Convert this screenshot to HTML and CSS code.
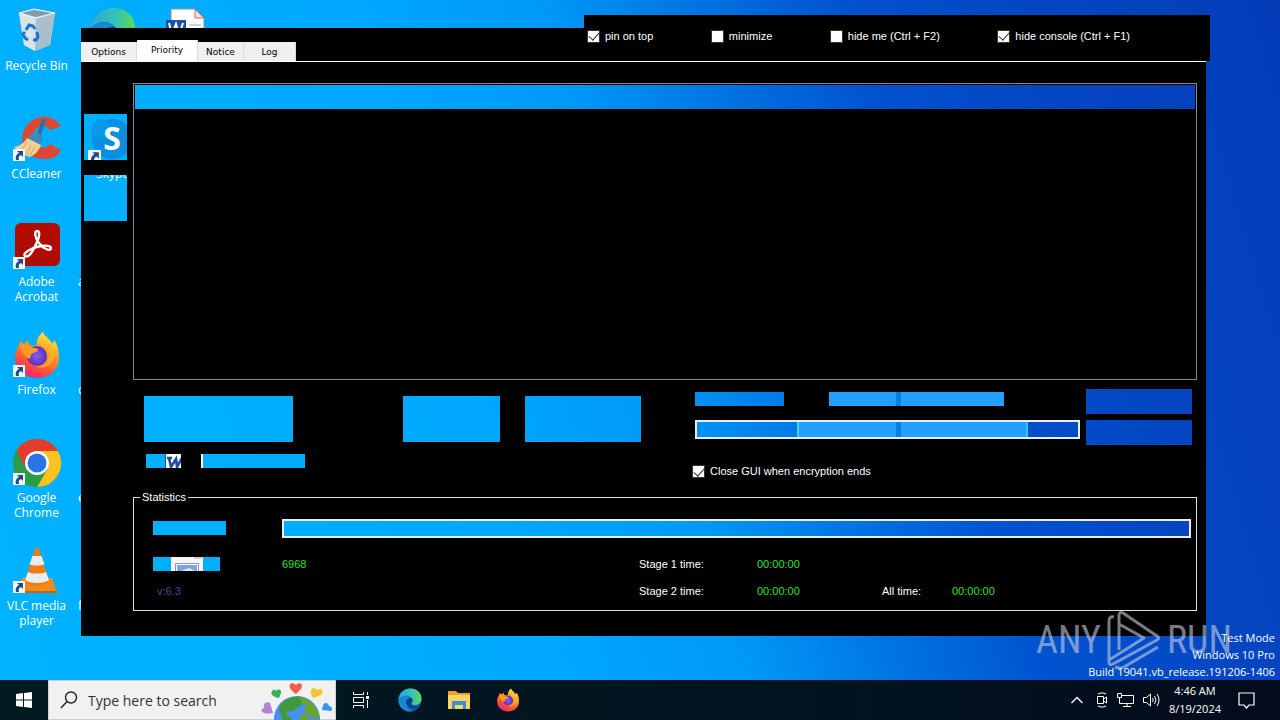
FILE: index.html
```
<!DOCTYPE html>
<html lang="en">
<head>
<meta charset="utf-8">
<title>Desktop</title>
<link rel="stylesheet" href="styles.css">
</head>

<body>
  <!-- shared icons -->
  <svg class="sprite" aria-hidden="true">
    <defs>
      <linearGradient id="edgeTop" x1="0" y1="0" x2="1" y2="0"><stop offset="0" stop-color="#2aa8dc"/><stop offset=".6" stop-color="#35c3b5"/><stop offset="1" stop-color="#63d94e"/></linearGradient>
      <linearGradient id="edgeLow" x1="0" y1="0" x2="1" y2="1"><stop offset="0" stop-color="#1c8fdc"/><stop offset="1" stop-color="#0f4c9c"/></linearGradient>
      <linearGradient id="foxBody" x1=".8" y1="0" x2=".3" y2="1"><stop offset="0" stop-color="#fff04a"/><stop offset=".4" stop-color="#ff9a1f"/><stop offset=".75" stop-color="#ff4b3c"/><stop offset="1" stop-color="#e8207e"/></linearGradient>
      <radialGradient id="foxCore"><stop offset="0" stop-color="#8a5cf5"/><stop offset="1" stop-color="#5533b8"/></radialGradient>
    </defs>
    <symbol id="edge" viewBox="0 0 48 48">
      <circle cx="24" cy="24" r="23" fill="url(#edgeLow)"/>
      <path d="M1 23C3 9 13 1 25 1c13 0 22 9 22 20 0 8-6 13-13 13-5 0-8-2-7-4 3-3 3-7 0-10C21 13 8 13 1 23z" fill="url(#edgeTop)"/>
      <path d="M1 24c6-9 19-11 26-4-8-2-12 4-11 11 1 8 8 14 15 15C14 50 0 38 1 24z" fill="#1787d8"/>
      <path d="M27 20c-7-1-11 5-10 11 2 9 15 14 26 6-9 2-17-1-16-7 3-3 3-7 0-10z" fill="#0d3f86"/>
    </symbol>
    <symbol id="firefox" viewBox="0 0 48 48">
      <path d="M46 27c0 12-10 20-22 20S2 38 2 26c0-5 2-9 4-12l1-4 4 3 4-4c0 4 2 5 4 6l5-1c-1-5 2-10 6-13 2 5 6 6 9 11 1 1 2-1 2-3 4 5 5 12 5 18z" fill="url(#foxBody)"/>
      <circle cx="24" cy="25" r="10" fill="url(#foxCore)"/>
      <path d="M7 14c6-2 11 2 14 3 1 0 4 0 4 2 0 3-6 2-7 5-1 2 0 3-2 4-4-3-8-6-9-14z" fill="#ff9b22"/>
      <path d="M24 15c5-3 11 1 12 7 1 9-6 14-14 13 11 5 20-2 20-13 0-9-9-13-18-7z" fill="#ffb62a" opacity=".65"/>
    </symbol>
    <symbol id="shortcut" viewBox="0 0 12 12">
      <path d="M0 0h12v12H0z" fill="#f4f8fc"/>
      <path d="M3 11C2 7 4 5 6 4L4 2h6v6L8 6C6 7 5 8 6 11z" fill="#1f4a86"/>
    </symbol>
  </svg>

  <main class="desktop">
    <ul class="apps">
      <li class="app">
        <svg class="app-icon" viewBox="0 0 48 48">
          <path d="M6 6l15-4 21 4-5 32-15 6-11-6z" fill="#b9cfdc"/>
          <path d="M6 6l17 5-1 33-11-6z" fill="#d9e3e8"/>
          <path d="M23 11l19-5-5 32-15 6z" fill="#a9bfcb"/>
          <path d="M9 6l12-3 18 3-16 4z" fill="#7e9cab"/>
          <path d="M6 6l15-4 21 4-19 5z" fill="none" stroke="#eef6fa"/>
          <path d="M13 23l3-5 4 1 2 3M24 25l1 5-2 3h-3M15 33l-3-2-2-4 2-2" fill="none" stroke="#1378cf" stroke-width="3"/>
        </svg>
        <span class="app-name">Recycle Bin</span>
      </li>
      <li class="app">
        <svg class="app-icon" viewBox="0 0 48 48">
          <path d="M48 11C38-4 15 0 10 18 6 36 19 45 33 44c7 0 12-3 15-9l-11-6c-7 8-17 1-16-9 1-10 11-12 16-5z" fill="#de4733"/>
          <path d="M29 4l-6 17 4 2 6-18z" fill="#2873ad"/>
          <path d="M19 18c6-2 13 3 10 10l-5 3-10-6z" fill="#3e89bf"/>
          <path d="M14 23l14 7c-2 6-7 11-12 12C10 40 4 35 1 32c6-1 10-4 13-9z" fill="#f3cf92"/>
          <path d="M13 28L8 37M18 30l-4 10M22 32l-5 8" stroke="#dba75e"/>
          <use href="#shortcut" x="0" y="34" width="12" height="12"/>
        </svg>
        <span class="app-name">CCleaner</span>
      </li>
      <li class="app">
        <svg class="app-icon" viewBox="0 0 48 48">
          <rect x="2" y="0" width="45" height="43" rx="6" fill="#b20b00"/>
          <path d="M12 33c-3-3 8-9 16-10 5-1 10 0 10 2 0 4-8 1-12-5-4-5-5-12-2-12s3 5 0 11c-3 7-8 17-12 14z" fill="none" stroke="#fff" stroke-width="2.4"/>
          <use href="#shortcut" x="0" y="34" width="12" height="12"/>
        </svg>
        <span class="app-name">Adobe<br>Acrobat</span>
      </li>
      <li class="app">
        <svg class="app-icon" viewBox="0 0 48 48">
          <use href="#firefox" width="48" height="48"/>
          <use href="#shortcut" x="0" y="34" width="12" height="12"/>
        </svg>
        <span class="app-name">Firefox</span>
      </li>
      <li class="app">
        <svg class="app-icon" viewBox="0 0 48 48">
          <circle cx="24" cy="24" r="24" fill="#34a853"/>
          <path d="M3.200 12A24 24 0 0 1 44.800 12H24L13.600 30z" fill="#e33b2e"/>
          <path d="M44.800 12A24 24 0 0 1 24 48L34.400 30 24 12z" fill="#fcc31e"/>
          <path d="M3.200 12A24 24 0 0 0 24 48L34.400 30H13.600z" fill="#2b9c47"/>
          <circle cx="24" cy="24" r="12" fill="#fff"/>
          <circle cx="24" cy="24" r="9.500" fill="#2a74e8"/>
          <use href="#shortcut" x="0" y="34" width="12" height="12"/>
        </svg>
        <span class="app-name">Google<br>Chrome</span>
      </li>
      <li class="app">
        <svg class="app-icon" viewBox="0 0 48 48">
          <path d="M9 31h30l5 15H5z" fill="#f08a1c"/>
          <path d="M5 44h39v2H5z" fill="#c9600c"/>
          <path d="M22 2q2-2 4 0l10 32c-3 6-21 6-24 0z" fill="#ee7c10"/>
          <path d="M19.500 9h9l3 8c-3 2-12 2-15 0zM15 25c5 2 13 2 18 0l3 8c-5 4-19 4-24 0z" fill="#e9edf0"/>
          <use href="#shortcut" x="0" y="34" width="12" height="12"/>
        </svg>
        <span class="app-name">VLC media<br>player</span>
      </li>

      <li class="app">
        <svg class="app-icon" viewBox="0 0 48 48"><use href="#edge" width="48" height="48"/></svg>
      </li>
      <li class="app covered row-3"><span class="app-name">a</span></li>
      <li class="app covered"><span class="app-name">c</span></li>
      <li class="app covered"><span class="app-name">e</span></li>
      <li class="app covered"><span class="app-name">f</span></li>

      <li class="app third">
        <svg class="app-icon" viewBox="0 0 48 48">
          <path d="M8 2h24l9 9v35H8z" fill="#fff" stroke="#8c9197"/>
          <path d="M32 2v9h9z" fill="#dfe3e8" stroke="#d2665a"/>
          <path d="M26 18h12M26 22h12" stroke="#9aa9c4"/>
          <path d="M3 13h20v20H3z" fill="#1f52a3"/>
          <path d="M6 16l3 12 4-11 3 11 4-12" fill="none" stroke="#fff" stroke-width="2"/>
        </svg>
      </li>
    </ul>

    <section class="window main-window">
      <nav class="tabs">
        <button type="button" class="tab">Options</button>
        <button type="button" class="tab active">Priority</button>
        <button type="button" class="tab">Notice</button>
        <button type="button" class="tab">Log</button>
      </nav>

      <div class="tab-body">
        <div class="side">
          <div class="glass side-pane">
            <svg class="skype" viewBox="0 0 43 46">
              <circle cx="28" cy="25" r="20" fill="#0b8fe0"/>
              <circle cx="17" cy="15" r="10" fill="#089ae8"/>
              <text x="28" y="36" class="skype-letter">S</text>
              <use href="#shortcut" x="4" y="36" width="13" height="13"/>
            </svg>
          </div>
          <div class="glass side-pane"><span class="app-name cut">Skype</span></div>
        </div>

        <div class="content">
          <div class="list"><div class="glass list-header"></div></div>

          <div class="controls">
            <div class="actions">
              <div class="big-buttons">
                <button type="button" class="glass big wide" aria-label="Action 1"></button>
                <button type="button" class="glass big" aria-label="Action 2"></button>
                <button type="button" class="glass big mid" aria-label="Action 3"></button>
              </div>
              <div class="fields">
                <div class="glass field-label">
                  <svg class="word-bit" viewBox="0 0 16 14"><path d="M0 0h16v14H0z" fill="#fff"/><path d="M0 0h1v14H0z" fill="#1f4f9c"/><path d="M2 4h5M4 4l2 9 5-8 1 8 5-9" fill="none" stroke="#1f4f9c" stroke-width="2.600"/></svg>
                </div>
                <div class="glass field-value"></div>
              </div>
            </div>

            <div class="load">
              <div class="load-labels">
                <div class="glass load-name"></div>
                <div class="glass load-value"></div>
              </div>
              <div class="glass bar"></div>
              <label class="check"><input type="checkbox" checked>Close GUI when encryption ends</label>
            </div>

            <div class="run-buttons">
              <button type="button" class="glass run" aria-label="Run 1"></button>
              <button type="button" class="glass run" aria-label="Run 2"></button>
            </div>
          </div>

          <fieldset class="stats">
            <legend>Statistics</legend>
            <div class="stats-grid">
              <div class="glass stat-label"></div>
              <div class="glass bar total"></div>
              <div class="glass stat-label short">
                <svg class="doc-bit" viewBox="0 0 32 14"><path d="M0 0h32v14H0z" fill="#f6f7fb"/><path d="M4.500 14V6.500h23V14" fill="#fff" stroke="#8d9ab5"/><path d="M6 8h20v6H6z" fill="#7fa4e4"/><path d="M10 14l8-3 6 3z" fill="#dce8fa"/><path d="M23 1h8" stroke="#e08a84"/></svg>
              </div>
              <span class="num">6968</span>
              <span>Stage 1 time:</span>
              <span class="num all-rest">00:00:00</span>
              <span class="version">v:6.3</span>
              <span class="stage-2">Stage 2 time:</span>
              <span class="num">00:00:00</span>
              <span>All time:</span>
              <span class="num">00:00:00</span>
            </div>
          </fieldset>
        </div>
      </div>
    </section>

    <section class="window option-bar">
      <label class="check"><input type="checkbox" checked>pin on top</label>
      <label class="check"><input type="checkbox">minimize</label>
      <label class="check"><input type="checkbox">hide me (Ctrl + F2)</label>
      <label class="check"><input type="checkbox" checked>hide console (Ctrl + F1)</label>
    </section>

    <div class="watermark">
      <span>ANY</span>
      <svg class="play" viewBox="0 0 56 60" fill="none" stroke="currentColor" stroke-width="3" stroke-linejoin="round">
        <path d="M8 7q-5-1-5 4v41q0 4 4 2l44-24q3-2 0-4L17 3q-4-2-4 3v34M13 14l25 14-35 22"/>
        <path d="M9 57q5 2 9 0l34-20"/>
      </svg>
      <span>RUN</span>
    </div>
    <p class="build">Test Mode<br>Windows 10 Pro<br>Build 19041.vb_release.191206-1406</p>
  </main>

  <footer class="taskbar">
    <button type="button" class="task start" aria-label="Start">
      <svg width="16" height="16" viewBox="0 0 16 16" fill="#fff"><path d="M0 2l7-1v6.500H0zM8 1l8-1v7.500H8zM0 8.500h7V15l-7-1zM8 8.500h8V16l-8-1z"/></svg>
    </button>
    <label class="search">
      <svg width="18" height="18" viewBox="0 0 18 18" fill="none" stroke="#222" stroke-width="1.400"><circle cx="11" cy="6.500" r="5.500"/><path d="M7 10.500L1 17"/></svg>
      <input type="text" placeholder="Type here to search">
      <svg class="doodle" viewBox="0 0 72 40">
        <circle cx="37" cy="39" r="23" fill="#4a8ef0"/>
        <path d="M20 26c5-8 16-11 24-8 3 3-3 4-3 7 0 3-6 1-6 5-4 2-7 0-9 3 1 4 5 3 6 7H22c1-5-5-7-2-14z" fill="#3f9b38"/>
        <path d="M40 17c11 2 19 11 19 21-4 2-7 0-8-4-4 0-8-1-7-5l4-3c-4-1-8-3-8-9zM41 34l7 1 2 5H40z" fill="#6aa52c"/>
        <path d="M36 14c-9-6-7-11-3-11l3 2c4-4 8 0 5 4z" fill="#f0604e"/>
        <path d="M19 18c-8-1-9-6-6-8 2-1 3 1 3 1 2-3 6-1 5 2z" fill="#36b25c"/>
        <path d="M53 18c-4-6-2-10 1-10l3 2c5-3 7 2 4 5z" fill="#f9c12c"/>
        <path d="M13 33c-10 2-13-2-11-4l2-1c-1-5 3-7 6-5z" fill="#b184dc"/>
        <path d="M62 30c1-8 4-8 6-6l1 2c4 1 4 4 2 5z" fill="#2f9be8"/>
      </svg>
    </label>
    <button type="button" class="task" aria-label="Task View">
      <svg width="18" height="18" viewBox="0 0 18 18" fill="none" stroke="#fff"><path d="M1.500 1v2.500h10V1M1.500 17v-2.500h10V17M1.500 6.500h10v5h-10zM15.500 1v3M15.500 9v8"/><path d="M14 5h3v3h-3z" fill="#fff" stroke="none"/></svg>
    </button>
    <button type="button" class="task" aria-label="Edge"><svg width="24" height="24"><use href="#edge"/></svg></button>
    <button type="button" class="task" aria-label="File Explorer">
      <svg width="22" height="20" viewBox="0 0 22 20"><path d="M0 1h8l2 2h12v15H0z" fill="#e8a321"/><path d="M0 5h22v14H0z" fill="#fcd462"/><path d="M4 11h14v8h-3v-4H7v4H4z" fill="#3a8fd6"/></svg>
    </button>
    <button type="button" class="task" aria-label="Firefox"><svg width="24" height="24"><use href="#firefox"/></svg></button>

    <div class="tray">
      <svg width="12" height="8" viewBox="0 0 12 8" fill="none" stroke="#fff" stroke-width="1.300"><path d="M.5 7L6 1.500 11.500 7"/></svg>
      <svg class="camera" width="12" height="16" viewBox="0 0 12 16" fill="none" stroke="#fff"><path d="M1.500 4.500h6v7h-6zM7.500 7l3-2v6l-3-2M2 2q4-2.500 8 0M2 14q4 2.500 8 0"/></svg>
      <svg width="17" height="14" viewBox="0 0 17 14" fill="none" stroke="#fff"><path d="M4.500 2.500h12v8h-12M6 13.500h8M10 10.500v3M.5.500h4v4h-4zM2.500 4.500v6h4"/></svg>
      <svg width="17" height="14" viewBox="0 0 17 14" fill="none" stroke="#fff"><path d="M.5 4.500h3l4-3.500v12l-4-3.500h-3zM9.500 5q1.500 2 0 4M11.500 3q3 4 0 8M14 1q4 6 0 12"/></svg>
      <time class="clock">4:46 AM<br>8/19/2024</time>
      <svg class="notes" width="17" height="17" viewBox="0 0 17 17" fill="none" stroke="#fff" stroke-width="1.200"><path d="M1 1h15v12h-5l-2.500 3L6 13H1z"/></svg>
    </div>
  </footer>
</body>
</html>
```
FILE: styles.css
```
:root {
  --wallpaper: linear-gradient(73deg, #00b2ff 0%, #00aeff 24%, #00a8ff 38%, #0098f6 51%, #0070e0 62%, #0052d0 71%, #0446c2 83%, #043cb8 100%);
  --logo: linear-gradient(90deg, #36dcf6 0 2px, #22a0ff 2px 99px, #0a7ee0 99px 104px, #22a0ff 104px 229px, #36c4ff 229px);
}

* { box-sizing: border-box; }

body {
  margin: 0;
  height: 100vh;
  display: flex;
  flex-direction: column;
  overflow: hidden;
  background: var(--wallpaper) fixed;
  font-family: "Liberation Sans", Arial, sans-serif;
  font-size: 11px;
  color: #fff;
}

button {
  border: 0;
  padding: 0;
  font: inherit;
}

.sprite {
  position: absolute;
  width: 0;
  height: 0;
}

.desktop {
  flex: 1;
  position: relative;
  min-height: 0;
}

/* desktop icons */
.apps {
  list-style: none;
  margin: 0;
  padding: 0;
  display: grid;
  grid-template-rows: repeat(6, 108px);
  grid-auto-columns: 73px;
  grid-auto-flow: column;
  column-gap: 2px;
}
.app {
  display: flex;
  flex-direction: column;
  align-items: center;
  gap: 3px;
  padding-top: 7px;
}
.app-icon {
  width: 48px;
  height: 48px;
}
.app-name {
  font: 12px/15px "Open Sans", "Noto Sans", sans-serif;
  text-align: center;
  white-space: nowrap;
}
.covered {
  padding: 58px 0 0 3px;
  align-items: flex-start;
}
.row-3 { grid-row: 3; }
.third {
  grid-column: 3;
  grid-row: 1;
}

/* windows */
.window {
  position: absolute;
  background: #000;
}
.main-window {
  left: 81px;
  right: 74px;
  top: 28px;
}
.option-bar {
  left: 584px;
  right: 70px;
  top: 15px;
  height: 46px;
  padding: 0 80px 4px 3px;
  display: flex;
  align-items: center;
  justify-content: space-between;
}

/* parts of a window that let the wallpaper through */
.glass {
  background: var(--logo) 797px 385px / 231px 60px no-repeat fixed, var(--wallpaper) fixed;
}

.tabs {
  height: 34px;
  display: flex;
  align-items: flex-end;
  border-bottom: 1px solid #fff;
}
.tab {
  width: 52px;
  height: 19px;
  background: #f0f0f0;
  border-right: 1px solid #dcdcdc;
  font: 9px "DejaVu Sans", Verdana, sans-serif;
  color: #000;
}
.tab:first-child { width: 56px; }
.tab:nth-child(3) { width: 46px; }
.tab.active {
  width: 61px;
  height: 21px;
  padding-bottom: 2px;
  background: #fff;
}

.tab-body {
  display: flex;
  gap: 6px;
  padding: 21px 9px 25px 3px;
}
.side {
  width: 43px;
  padding-top: 31px;
  display: flex;
  flex-direction: column;
  gap: 15px;
}
.side-pane {
  height: 46px;
  overflow: hidden;
}
.skype {
  display: block;
  width: 43px;
  height: 46px;
}
.skype-letter {
  font: bold 32px "Open Sans", sans-serif;
  fill: #fff;
  text-anchor: middle;
}
.cut {
  display: block;
  margin: -9px 0 0 12px;
  text-align: left;
}

.content { flex: 1; }
.list {
  height: 297px;
  padding: 1px;
  border: 1px solid #7f8a90;
}
.list-header { height: 24px; }

.controls {
  display: grid;
  grid-template-columns: 551fr 391fr 106px;
  padding: 9px 5px 0 11px;
}
.actions { padding-top: 7px; }
.big-buttons, .fields, .load-labels { display: flex; }
.big {
  width: 97px;
  height: 46px;
}
.big.wide {
  width: 149px;
  margin-right: 110px;
}
.big.mid {
  width: 116px;
  margin-left: 25px;
}
.fields {
  gap: 20px;
  padding: 12px 0 0 2px;
}
.field-label {
  width: 35px;
  height: 14px;
  display: flex;
  justify-content: flex-end;
}
.word-bit {
  width: 16px;
  height: 14px;
}
.field-value {
  width: 104px;
  border-left: 2px solid #fff;
}

.load { padding: 3px 6px 0 0; }
.load-labels {
  gap: 45px;
  margin-bottom: 14px;
}
.load-name {
  width: 89px;
  height: 14px;
}
.load-value { width: 175px; }
.bar {
  height: 19px;
  border: 2px solid #e6f0f4;
}
.load .check { margin: 26px 0 0 -3px; }

.run-buttons {
  display: flex;
  flex-direction: column;
  gap: 6px;
}
.run { height: 25px; }

.check {
  display: flex;
  align-items: center;
  gap: 5px;
  line-height: 13px;
}
.check input {
  appearance: none;
  width: 13px;
  height: 13px;
  margin: 0;
  background: #fff;
  border: 1px solid #333;
  display: grid;
  place-items: center;
}
.check input:checked::before {
  content: "";
  width: 9px;
  height: 5px;
  border: solid #333;
  border-width: 0 0 1px 1px;
  transform: translateY(-1px) rotate(-48deg);
}

.stats {
  min-width: 0;
  margin: 13px 0 0;
  padding: 9px 5px 12px 19px;
  border: 1px solid #dcdcdc;
}
.stats legend {
  margin-left: -13px;
  padding: 0 2px;
  line-height: 12px;
}
.stats-grid {
  display: grid;
  grid-template-columns: 129px 357fr 118px 125px 70px 239fr;
  grid-template-rows: 32px 14px 14px;
  row-gap: 13px;
  align-items: center;
  line-height: 14px;
}
.stats-grid .total {
  grid-column: 2 / -1;
}
.stat-label {
  width: 73px;
  height: 14px;
}
.stat-label.short {
  width: 67px;
  padding-left: 18px;
}
.doc-bit {
  display: block;
  width: 32px;
  height: 14px;
}
.num { color: #2fe02f; }
.all-rest { grid-column: 4 / -1; }
.version {
  padding-left: 4px;
  color: #4a4a9c;
}
.stage-2 { grid-column: 3; }

/* corner marks */
.watermark {
  position: absolute;
  right: 48px;
  bottom: 10px;
  display: flex;
  align-items: center;
  gap: 5px;
  font: 38px/60px "Roboto Condensed", "Open Sans Condensed", "Liberation Sans Narrow", sans-serif;
  color: rgba(200, 208, 220, .6);
}
.play {
  width: 56px;
  height: 60px;
}
.build {
  position: absolute;
  right: 5px;
  bottom: 0;
  margin: 0;
  font: 11px/17px "Open Sans", "Noto Sans", sans-serif;
  text-align: right;
}

/* taskbar */
.taskbar {
  height: 40px;
  display: flex;
  background: linear-gradient(90deg, #011a22, #02141f 60%, #030b1c);
}
.task {
  width: 49px;
  display: flex;
  align-items: center;
  justify-content: center;
  background: none;
}
.start { width: 48px; }
.search {
  width: 288px;
  padding: 0 3px 0 11px;
  display: flex;
  align-items: center;
  gap: 10px;
  background: #f1f1f1;
  border: 1px solid #cfcfcf;
}
.search svg { flex: none; }
.search input {
  flex: 1;
  min-width: 0;
  padding: 0;
  border: 0;
  background: none;
  font: 14px "Open Sans", "Noto Sans", sans-serif;
}
.search input::placeholder { color: #333; }
.doodle {
  width: 72px;
  height: 40px;
}
.tray {
  margin-left: auto;
  padding-right: 25px;
  display: flex;
  align-items: center;
  gap: 9px;
}
.camera { margin-left: 4px; }
.clock {
  font: 11px/18px "Open Sans", "Noto Sans", sans-serif;
  text-align: center;
}
.notes { margin-left: 8px; }
```
